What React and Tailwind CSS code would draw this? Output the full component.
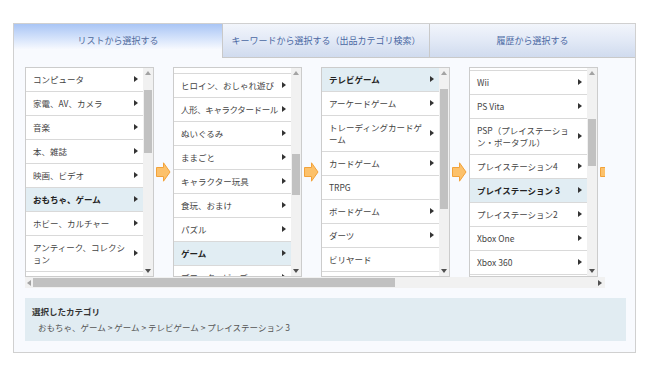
const font = { fontFamily: '"Noto Sans CJK JP", "Noto Sans", sans-serif' }

const columns = [
  {
    offset: 'mt-0',
    thumb: 'mt-[12px] h-[63px]',
    items: [
      { t: 'コンピュータ', a: true },
      { t: '家電、AV、カメラ', a: true },
      { t: '音楽', a: true },
      { t: '本、雑誌', a: true },
      { t: '映画、ビデオ', a: true },
      { t: 'おもちゃ、ゲーム', a: true, sel: true },
      { t: 'ホビー、カルチャー', a: true },
      { t: 'アンティーク、コレクション', a: true, wrap: true },
      { t: 'ファッション', a: true },
    ],
  },
  {
    offset: '-mt-[18px]',
    thumb: 'mt-[76px] h-[41px]',
    items: [
      { t: 'ヒーロー', a: true },
      { t: 'ヒロイン、おしゃれ遊び', a: true },
      { t: '人形、キャラクタードール', a: true, tight: true },
      { t: 'ぬいぐるみ', a: true },
      { t: 'ままごと', a: true },
      { t: 'キャラクター玩具', a: true },
      { t: '食玩、おまけ', a: true },
      { t: 'パズル', a: true },
      { t: 'ゲーム', a: true, sel: true },
      { t: 'ブロック、ビーズ', a: true },
    ],
  },
  {
    offset: 'mt-0',
    thumb: 'mt-[11px] h-[120px]',
    items: [
      { t: 'テレビゲーム', a: true, sel: true },
      { t: 'アーケードゲーム', a: true },
      { t: 'トレーディングカードゲーム', a: true, wrap: true },
      { t: 'カードゲーム', a: true },
      { t: 'TRPG' },
      { t: 'ボードゲーム', a: true },
      { t: 'ダーツ', a: true },
      { t: 'ビリヤード' },
      { t: '麻雀', a: true },
    ],
  },
  {
    offset: '-mt-[21px]',
    thumb: 'mt-[41px] h-[47px]',
    items: [
      { t: 'Wii U', a: true },
      { t: 'Wii', a: true },
      { t: 'PS Vita', a: true },
      { t: 'PSP（プレイステーション・ポータブル）', a: true, wrap: true },
      { t: 'プレイステーション4', a: true },
      { t: 'プレイステーション 3', a: true, sel: true },
      { t: 'プレイステーション2', a: true },
      { t: 'Xbox One', a: true },
      { t: 'Xbox 360', a: true },
    ],
  },
]

function Tri({ dir = 'right', color = '#333' }) {
  const pts = {
    right: '0,0 4,3 0,6',
    left: '4,0 0,3 4,6',
    up: '0,4 3,0 6,4',
    down: '0,0 6,0 3,4',
  }[dir]
  const w = dir === 'up' || dir === 'down' ? 6 : 4
  const h = dir === 'up' || dir === 'down' ? 4 : 6
  return (
    <svg width={w} height={h} viewBox={`0 0 ${w} ${h}`}>
      <polygon points={pts} fill={color} />
    </svg>
  )
}

function Arrow() {
  return (
    <div className="w-[19px] shrink-0 flex items-center justify-center">
      <svg width="15" height="20" viewBox="0 0 15 20">
        <path d="M0.5 5.5 H7.5 V0.8 L14 10 L7.5 19.2 V14.5 H0.5 Z" fill="#fcc16b" stroke="#f2a23a" strokeWidth="1" />
      </svg>
    </div>
  )
}

function Column({ col }) {
  return (
    <div className="w-[129px] h-[210px] shrink-0 border border-[#cccccc] bg-white flex overflow-hidden">
      <div className="flex-1 min-w-0 overflow-hidden">
        <div className={col.offset}>
          {col.items.map((it, i) => (
            <div
              key={i}
              className={`flex items-center border-b border-[#d9d9d9] pl-[7px] pr-[5px] pt-[5px] pb-[6px] leading-[12px] text-[8.5px] ${
                it.sel ? 'bg-[#e1edf3] font-bold text-[#222]' : 'text-[#444]'
              }`}
            >
              <span
                className={`flex-1 min-w-0 ${it.wrap ? '' : 'whitespace-nowrap'} ${
                  it.tight ? 'tracking-[-0.4px]' : ''
                }`}
              >
                {it.t}
              </span>
              {it.a && (
                <span className="shrink-0 ml-[1px]">
                  <Tri />
                </span>
              )}
            </div>
          ))}
        </div>
      </div>
      <div className="w-[10px] shrink-0 bg-[#f1f1f1] flex flex-col items-center">
        <div className="h-[10px] flex items-center justify-center">
          <Tri dir="up" color="#a3a3a3" />
        </div>
        <div className={`w-[8px] bg-[#c1c1c1] ${col.thumb}`} />
        <div className="flex-1" />
        <div className="h-[10px] flex items-center justify-center">
          <Tri dir="down" color="#505050" />
        </div>
      </div>
    </div>
  )
}

export default function App() {
  return (
    <div className="w-[650px] h-[370px] bg-white pt-[23px] pl-[13px]" style={font}>
      <div className="w-[623px] h-[330px] border border-[#d0d0d0] bg-[#f8fafe] flex flex-col">
        <div className="flex h-[34px] text-[9px]">
          <div className="w-[208px] flex items-center justify-center text-[#4f6a9c] bg-[linear-gradient(to_bottom,#a9c5f5_0%,#d8e5fb_45%,#f8fafe_75%)]">
            リストから選択する
          </div>
          <div className="w-[207px] flex items-center justify-center text-[#4a68a3] border-l border-b border-[#c9c9c9] bg-[linear-gradient(to_bottom,#f2f5fb_0%,#e2e9f6_50%,#d0dbee_100%)]">
            キーワードから選択する（出品カテゴリ検索）
          </div>
          <div className="flex-1 flex items-center justify-center text-[#4a68a3] border-l border-b border-[#c9c9c9] bg-[linear-gradient(to_bottom,#f2f5fb_0%,#e2e9f6_50%,#d0dbee_100%)]">
            履歴から選択する
          </div>
        </div>

        <div className="pl-[11px] pt-[9px]">
          <div className="w-[580px] overflow-hidden">
            <div className="flex">
              {columns.map((c, i) => (
                <div key={i} className="flex shrink-0">
                  <Column col={c} />
                  <Arrow />
                </div>
              ))}
            </div>
          </div>
          <div className="w-[580px] h-[11px] bg-[#f1f1f1] flex items-center">
            <div className="w-[8px] flex justify-center">
              <Tri dir="left" color="#a3a3a3" />
            </div>
            <div className="w-[362px] h-[9px] bg-[#c1c1c1]" />
            <div className="flex-1" />
            <div className="w-[10px] flex justify-center">
              <Tri dir="right" color="#505050" />
            </div>
          </div>
        </div>

        <div className="mt-[10px] ml-[11px] w-[601px] h-[43px] bg-[#e1ecf2] pl-[7px] pt-[7px]">
          <div className="text-[8.5px] font-bold text-[#333] leading-[12px]">選択したカテゴリ</div>
          <div className="mt-[4px] pl-[6px] text-[8.5px] text-[#555] leading-[12px]">
            おもちゃ、ゲーム &gt; ゲーム &gt; テレビゲーム &gt; プレイステーション 3
          </div>
        </div>
      </div>
    </div>
  )
}
